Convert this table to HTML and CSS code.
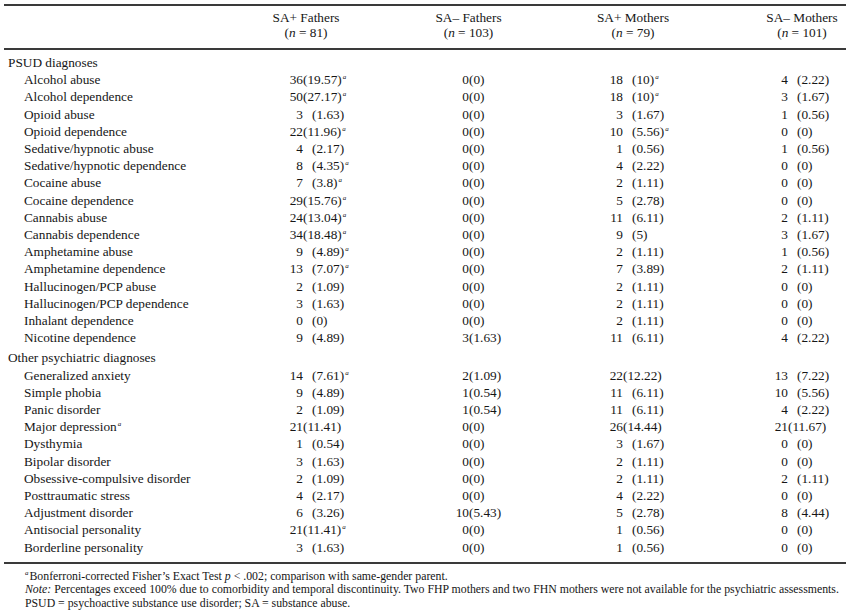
FILE: index.html
```html
<!DOCTYPE html>
<html lang="en">
<head>
<meta charset="utf-8">
<title>PSUD and psychiatric diagnoses of parents</title>
<link rel="stylesheet" href="styles.css">
</head>
<body>
<div class="page">
<table class="tbl">
  <colgroup>
    <col class="c-label"><col class="c1"><col class="c2"><col class="c3"><col class="c4">
  </colgroup>
  <thead>
    <tr>
      <th></th>
      <th>SA+ Fathers<br>(<i>n</i> = 81)</th>
      <th>SA– Fathers<br>(<i>n</i> = 103)</th>
      <th>SA+ Mothers<br>(<i>n</i> = 79)</th>
      <th class="h4">SA– Mothers<br>(<i>n</i> = 101)</th>
    </tr>
  </thead>
  <tbody>
    <tr class="first"><td class="sec">PSUD diagnoses</td><td></td><td></td><td></td><td></td></tr>
    <tr><td class="lab">Alcohol abuse</td><td class="v v1"><span class="n">36</span><span class="p">(19.57)<sup>a</sup></span></td><td class="v v2"><span class="n">0</span><span class="p">(0)</span></td><td class="v v3"><span class="n">18</span><span class="p g">(10)<sup>a</sup></span></td><td class="v v4"><span class="n">4</span><span class="p g">(2.22)</span></td></tr>
    <tr><td class="lab">Alcohol dependence</td><td class="v v1"><span class="n">50</span><span class="p">(27.17)<sup>a</sup></span></td><td class="v v2"><span class="n">0</span><span class="p">(0)</span></td><td class="v v3"><span class="n">18</span><span class="p g">(10)<sup>a</sup></span></td><td class="v v4"><span class="n">3</span><span class="p g">(1.67)</span></td></tr>
    <tr><td class="lab">Opioid abuse</td><td class="v v1"><span class="n">3</span><span class="p g">(1.63)</span></td><td class="v v2"><span class="n">0</span><span class="p">(0)</span></td><td class="v v3"><span class="n">3</span><span class="p g">(1.67)</span></td><td class="v v4"><span class="n">1</span><span class="p g">(0.56)</span></td></tr>
    <tr><td class="lab">Opioid dependence</td><td class="v v1"><span class="n">22</span><span class="p">(11.96)<sup>a</sup></span></td><td class="v v2"><span class="n">0</span><span class="p">(0)</span></td><td class="v v3"><span class="n">10</span><span class="p g">(5.56)<sup>a</sup></span></td><td class="v v4"><span class="n">0</span><span class="p g">(0)</span></td></tr>
    <tr><td class="lab">Sedative/hypnotic abuse</td><td class="v v1"><span class="n">4</span><span class="p g">(2.17)</span></td><td class="v v2"><span class="n">0</span><span class="p">(0)</span></td><td class="v v3"><span class="n">1</span><span class="p g">(0.56)</span></td><td class="v v4"><span class="n">1</span><span class="p g">(0.56)</span></td></tr>
    <tr><td class="lab">Sedative/hypnotic dependence</td><td class="v v1"><span class="n">8</span><span class="p g">(4.35)<sup>a</sup></span></td><td class="v v2"><span class="n">0</span><span class="p">(0)</span></td><td class="v v3"><span class="n">4</span><span class="p g">(2.22)</span></td><td class="v v4"><span class="n">0</span><span class="p g">(0)</span></td></tr>
    <tr><td class="lab">Cocaine abuse</td><td class="v v1"><span class="n">7</span><span class="p g">(3.8)<sup>a</sup></span></td><td class="v v2"><span class="n">0</span><span class="p">(0)</span></td><td class="v v3"><span class="n">2</span><span class="p g">(1.11)</span></td><td class="v v4"><span class="n">0</span><span class="p g">(0)</span></td></tr>
    <tr><td class="lab">Cocaine dependence</td><td class="v v1"><span class="n">29</span><span class="p">(15.76)<sup>a</sup></span></td><td class="v v2"><span class="n">0</span><span class="p">(0)</span></td><td class="v v3"><span class="n">5</span><span class="p g">(2.78)</span></td><td class="v v4"><span class="n">0</span><span class="p g">(0)</span></td></tr>
    <tr><td class="lab">Cannabis abuse</td><td class="v v1"><span class="n">24</span><span class="p">(13.04)<sup>a</sup></span></td><td class="v v2"><span class="n">0</span><span class="p">(0)</span></td><td class="v v3"><span class="n">11</span><span class="p g">(6.11)</span></td><td class="v v4"><span class="n">2</span><span class="p g">(1.11)</span></td></tr>
    <tr><td class="lab">Cannabis dependence</td><td class="v v1"><span class="n">34</span><span class="p">(18.48)<sup>a</sup></span></td><td class="v v2"><span class="n">0</span><span class="p">(0)</span></td><td class="v v3"><span class="n">9</span><span class="p g">(5)</span></td><td class="v v4"><span class="n">3</span><span class="p g">(1.67)</span></td></tr>
    <tr><td class="lab">Amphetamine abuse</td><td class="v v1"><span class="n">9</span><span class="p g">(4.89)<sup>a</sup></span></td><td class="v v2"><span class="n">0</span><span class="p">(0)</span></td><td class="v v3"><span class="n">2</span><span class="p g">(1.11)</span></td><td class="v v4"><span class="n">1</span><span class="p g">(0.56)</span></td></tr>
    <tr><td class="lab">Amphetamine dependence</td><td class="v v1"><span class="n">13</span><span class="p g">(7.07)<sup>a</sup></span></td><td class="v v2"><span class="n">0</span><span class="p">(0)</span></td><td class="v v3"><span class="n">7</span><span class="p g">(3.89)</span></td><td class="v v4"><span class="n">2</span><span class="p g">(1.11)</span></td></tr>
    <tr><td class="lab">Hallucinogen/PCP abuse</td><td class="v v1"><span class="n">2</span><span class="p g">(1.09)</span></td><td class="v v2"><span class="n">0</span><span class="p">(0)</span></td><td class="v v3"><span class="n">2</span><span class="p g">(1.11)</span></td><td class="v v4"><span class="n">0</span><span class="p g">(0)</span></td></tr>
    <tr><td class="lab">Hallucinogen/PCP dependence</td><td class="v v1"><span class="n">3</span><span class="p g">(1.63)</span></td><td class="v v2"><span class="n">0</span><span class="p">(0)</span></td><td class="v v3"><span class="n">2</span><span class="p g">(1.11)</span></td><td class="v v4"><span class="n">0</span><span class="p g">(0)</span></td></tr>
    <tr><td class="lab">Inhalant dependence</td><td class="v v1"><span class="n">0</span><span class="p g">(0)</span></td><td class="v v2"><span class="n">0</span><span class="p">(0)</span></td><td class="v v3"><span class="n">2</span><span class="p g">(1.11)</span></td><td class="v v4"><span class="n">0</span><span class="p g">(0)</span></td></tr>
    <tr><td class="lab">Nicotine dependence</td><td class="v v1"><span class="n">9</span><span class="p g">(4.89)</span></td><td class="v v2"><span class="n">3</span><span class="p">(1.63)</span></td><td class="v v3"><span class="n">11</span><span class="p g">(6.11)</span></td><td class="v v4"><span class="n">4</span><span class="p g">(2.22)</span></td></tr>
    <tr class="gapped"><td class="sec">Other psychiatric diagnoses</td><td></td><td></td><td></td><td></td></tr>
    <tr><td class="lab">Generalized anxiety</td><td class="v v1"><span class="n">14</span><span class="p g">(7.61)<sup>a</sup></span></td><td class="v v2"><span class="n">2</span><span class="p">(1.09)</span></td><td class="v v3"><span class="n">22</span><span class="p">(12.22)</span></td><td class="v v4"><span class="n">13</span><span class="p g">(7.22)</span></td></tr>
    <tr><td class="lab">Simple phobia</td><td class="v v1"><span class="n">9</span><span class="p g">(4.89)</span></td><td class="v v2"><span class="n">1</span><span class="p">(0.54)</span></td><td class="v v3"><span class="n">11</span><span class="p g">(6.11)</span></td><td class="v v4"><span class="n">10</span><span class="p g">(5.56)</span></td></tr>
    <tr><td class="lab">Panic disorder</td><td class="v v1"><span class="n">2</span><span class="p g">(1.09)</span></td><td class="v v2"><span class="n">1</span><span class="p">(0.54)</span></td><td class="v v3"><span class="n">11</span><span class="p g">(6.11)</span></td><td class="v v4"><span class="n">4</span><span class="p g">(2.22)</span></td></tr>
    <tr><td class="lab">Major depression<sup>a</sup></td><td class="v v1"><span class="n">21</span><span class="p">(11.41)</span></td><td class="v v2"><span class="n">0</span><span class="p">(0)</span></td><td class="v v3"><span class="n">26</span><span class="p">(14.44)</span></td><td class="v v4"><span class="n">21</span><span class="p">(11.67)</span></td></tr>
    <tr><td class="lab">Dysthymia</td><td class="v v1"><span class="n">1</span><span class="p g">(0.54)</span></td><td class="v v2"><span class="n">0</span><span class="p">(0)</span></td><td class="v v3"><span class="n">3</span><span class="p g">(1.67)</span></td><td class="v v4"><span class="n">0</span><span class="p g">(0)</span></td></tr>
    <tr><td class="lab">Bipolar disorder</td><td class="v v1"><span class="n">3</span><span class="p g">(1.63)</span></td><td class="v v2"><span class="n">0</span><span class="p">(0)</span></td><td class="v v3"><span class="n">2</span><span class="p g">(1.11)</span></td><td class="v v4"><span class="n">0</span><span class="p g">(0)</span></td></tr>
    <tr><td class="lab">Obsessive-compulsive disorder</td><td class="v v1"><span class="n">2</span><span class="p g">(1.09)</span></td><td class="v v2"><span class="n">0</span><span class="p">(0)</span></td><td class="v v3"><span class="n">2</span><span class="p g">(1.11)</span></td><td class="v v4"><span class="n">2</span><span class="p g">(1.11)</span></td></tr>
    <tr><td class="lab">Posttraumatic stress</td><td class="v v1"><span class="n">4</span><span class="p g">(2.17)</span></td><td class="v v2"><span class="n">0</span><span class="p">(0)</span></td><td class="v v3"><span class="n">4</span><span class="p g">(2.22)</span></td><td class="v v4"><span class="n">0</span><span class="p g">(0)</span></td></tr>
    <tr><td class="lab">Adjustment disorder</td><td class="v v1"><span class="n">6</span><span class="p g">(3.26)</span></td><td class="v v2"><span class="n">10</span><span class="p">(5.43)</span></td><td class="v v3"><span class="n">5</span><span class="p g">(2.78)</span></td><td class="v v4"><span class="n">8</span><span class="p g">(4.44)</span></td></tr>
    <tr><td class="lab">Antisocial personality</td><td class="v v1"><span class="n">21</span><span class="p">(11.41)<sup>a</sup></span></td><td class="v v2"><span class="n">0</span><span class="p">(0)</span></td><td class="v v3"><span class="n">1</span><span class="p g">(0.56)</span></td><td class="v v4"><span class="n">0</span><span class="p g">(0)</span></td></tr>
    <tr class="last"><td class="lab">Borderline personality</td><td class="v v1"><span class="n">3</span><span class="p g">(1.63)</span></td><td class="v v2"><span class="n">0</span><span class="p">(0)</span></td><td class="v v3"><span class="n">1</span><span class="p g">(0.56)</span></td><td class="v v4"><span class="n">0</span><span class="p g">(0)</span></td></tr>
  </tbody>
</table>
<div class="notes">
  <p><sup>a</sup>Bonferroni-corrected Fisher’s Exact Test <i>p</i> &lt; .002; comparison with same-gender parent.</p>
  <p><i>Note:</i> Percentages exceed 100% due to comorbidity and temporal discontinuity. Two FHP mothers and two FHN mothers were not available for the psychiatric assessments.</p>
  <p>PSUD = psychoactive substance use disorder; SA = substance abuse.</p>
</div>
</div>
</body>
</html>
```

FILE: styles.css
```css
html, body {
  margin: 0;
  padding: 0;
  background: #ffffff;
}

body {
  font-family: "Liberation Serif", "Times New Roman", serif;
  color: #161616;
}

.page {
  padding: 4px 4px 0 4px;
  width: 842px;
}

.tbl {
  width: 842px;
  table-layout: fixed;
  border-collapse: collapse;
  border-top: 2px solid #3a3a3a;
  border-bottom: 2px solid #3a3a3a;
  font-size: 13.3px;
}

.c-label { width: 221px; }
.c1 { width: 162px; }
.c2 { width: 163px; }
.c3 { width: 166px; }
.c4 { width: 130px; }

.tbl thead th {
  font-weight: normal;
  text-align: center;
  line-height: 15px;
  padding: 4px 0 8px 0;
  border-bottom: 2px solid #3a3a3a;
  vertical-align: top;
  white-space: nowrap;
}

.tbl thead th.h4 {
  padding-left: 42px;
}

.tbl tbody td {
  padding: 0;
  height: 17.2px;
  line-height: 17.2px;
  white-space: nowrap;
  vertical-align: middle;
}

.tbl tbody tr.first td {
  padding-top: 4px;
}

.tbl tbody tr.gapped td {
  padding-top: 3px;
}

.tbl tbody tr.last td {
  padding-bottom: 6px;
}

.sec {
  padding-left: 4px !important;
}

.lab {
  padding-left: 20px !important;
}

.v1 { padding-left: 62px !important; }
.v2 { padding-left: 66px !important; }
.v3 { padding-left: 57px !important; }
.v4 { padding-left: 56px !important; }

.n {
  display: inline-block;
  width: 16px;
  text-align: right;
}

.p.g {
  margin-left: 9px;
}

sup {
  font-size: 7px;
  font-style: italic;
  line-height: 0;
  vertical-align: 5px;
  margin-left: 1px;
}

.notes {
  padding: 6px 0 0 21px;
  font-size: 11.8px;
  line-height: 13.5px;
}

.notes p {
  margin: 0;
  white-space: nowrap;
}

.notes sup {
  margin-left: 0;
  margin-right: 1px;
}
```
